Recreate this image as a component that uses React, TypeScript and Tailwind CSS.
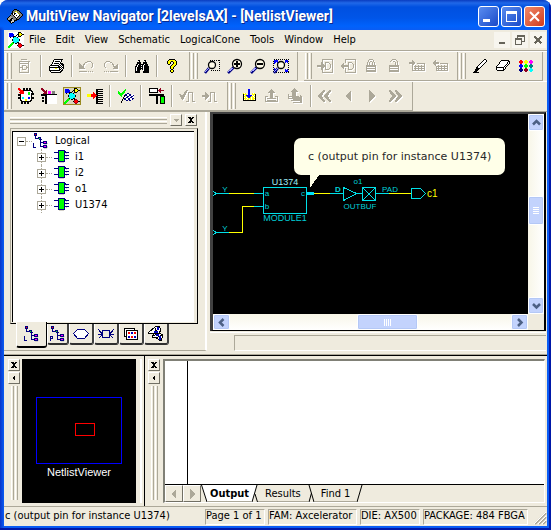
import type { ReactNode } from "react";

const palette: Record<string, string> = {
  k: "#000000", w: "#ffffff", g: "#aca899", s: "#d4d0c8", p: "#808080",
  y: "#ffff00", o: "#a0a000", b: "#0000ff", n: "#000080", r: "#ff0000",
  d: "#900020", G: "#00ff00", c: "#00ffff", m: "#ff00ff", t: "#008080",
};

function Pixels({ rows, size = 16 }: { rows: string[]; size?: number }) {
  return (
    <svg width={size} height={size} viewBox={`0 0 ${size} ${size}`} shapeRendering="crispEdges" aria-hidden="true">
      {rows.flatMap((row, y) =>
        [...row].map((ch, x) => (palette[ch] ? <rect key={`${x}-${y}`} x={x} y={y} width="1" height="1" fill={palette[ch]} /> : null)),
      )}
    </svg>
  );
}

function Icon({ children, size = 16 }: { children: ReactNode; size?: number }) {
  return (
    <svg width={size} height={size} viewBox={`0 0 ${size} ${size}`} fill="none" shapeRendering="crispEdges" aria-hidden="true">
      {children}
    </svg>
  );
}

/* Greyed-out icon: a white relief one pixel down and right of the grey shape. */
function Etched({ line, fill }: { line?: string; fill?: string }) {
  return (
    <Icon size={17}>
      {["#ffffff", "#aca899"].map((c, i) => (
        <g key={c} transform={i === 0 ? "translate(1 1)" : undefined}>
          {line && <path d={line} stroke={c} />}
          {fill && <path d={fill} fill={c} />}
        </g>
      ))}
    </Icon>
  );
}

const printer = [
  "................",
  ".....kkkkkkkkk..",
  "....kwwwwwwwk...",
  "....kwkkkkkwk...",
  "...kwwwwwwwk....",
  "...kwkkkkkwkkk..",
  "..kwwwwwwwkwkkk.",
  ".kkkkkkkkkwkwkk.",
  "kwwwwwwwwkkwkwk.",
  "kkkkkkkkkkkkwkk.",
  "kwwwwwyywwkwkwk.",
  "kwwwwwwwwwkkwk..",
  "kkkkkkkkkkkwkk..",
  ".kwwwwwwwwwkk...",
  "..kkkkkkkkkk....",
];
const binoculars = [
  "................",
  "................",
  "....kk....kk....",
  "....wk....wk....",
  "...kkkk..kkkk...",
  "...kkkk..kkkk...",
  "..kkwkkkkkwkkk..",
  "..kwkkkwkwkkkk..",
  ".kkwkkkkkwkkkkk.",
  ".kwkkkkwkwkkkkk.",
  ".kwkkkkkkwkkkkk.",
  ".kwkkkk.kwkkkkk.",
  ".kwkkk...wkkkkk.",
  ".kkkkk...kkkkkk.",
  ".kkkkk...kkkkkk.",
];
const question = [
  "................",
  "....kkkkkk......",
  "...kyyyyyyk.....",
  "..kyyykkyyyk....",
  "..kyyk..kyyk....",
  "..kyyk..kyyk....",
  "...kk..kyyyk....",
  "......kyyyk.....",
  ".....kyyyk......",
  ".....kyyk.......",
  ".....kyyk.......",
  "......kk........",
  ".....kyyk.......",
  ".....kyyk.......",
  "......kk........",
];
const pencil = [
  "................",
  "............kk..",
  "...........kwwk.",
  "..........kwwwk.",
  ".........kwwwk..",
  "........kwwwk...",
  ".......kwwwk....",
  "......kwwwk.....",
  ".....kwwwk......",
  "....kkwwk.......",
  "....kkkk........",
  "...kkkk.........",
  "...kkk..........",
  "..kkk...........",
  ".kkkkkk.........",
];
const eraser = [
  "................",
  "................",
  "......kkkkkkkk..",
  ".....kwwwwwwwkk.",
  "....kwwwwwwwkwk.",
  "....kwwwwwwwkwk.",
  "...kwwwwwwwkwk..",
  "..kwwwwwwwkwk...",
  ".kwwwwwwwkwk....",
  ".kkkkkkkkwk.....",
  ".kwwwwwwkwk.....",
  ".kwwwwwwkk......",
  "..kkkkkkk.......",
];
const swatches = [
  "................",
  "................",
  "..rr...yy...mm..",
  ".rrrr.yyyy.mmmm.",
  ".rrrr.yyyy.mmmm.",
  "..rr...yy...mm..",
  "..bb...GG...tt..",
  ".bbbb.GGGG.tttt.",
  ".bbbb.GGGG.tttt.",
  "..bb...GG...tt..",
  "..nn...dd...cc..",
  ".nnnn.dddd.cccc.",
  ".nnnn.dddd.cccc.",
  "..nn...dd...cc..",
];
const netlist = [
  "..........kkk...",
  ".bbbb.....kyyk..",
  ".bbbbb...kkyyykk",
  ".bbbbb..k.kyyk..",
  ".bbbbkkk..kkk...",
  "..k..kccck......",
  ".....cccccc.....",
  "....kcccccck....",
  "....kcccccck....",
  ".....cccccc.....",
  "....Gkccckk.....",
  "...GGG.kk.kdd...",
  "..GGG.....drrd..",
  ".GGG.....krrrrkk",
  "GGG.......drrd..",
  "GG.........dd...",
];
const drc = [
  "rr...kk.kk.kk...",
  "rrr..kk.kk.kk...",
  ".rrrrkkkkkkkkk..",
  "..rrrrwwwwwwwkk.",
  ".rrrrrwwwwGGwwk.",
  "..rrrrwwwwGGwkkk",
  "kkkwwwwwwwGGwkkk",
  "kkkwwwwwwwwwwk..",
  "..kwwwwwwwwwwk..",
  "kkkwccwwwwbbwkkk",
  "kkkwccwwwwbbwkkk",
  "..kwwwwyywwwwk..",
  "..kkwwwyywwwkk..",
  "...kkkkkkkkkk...",
  "...kk.kk.kk.....",
  "...kk.kk.kk.....",
];
const corner = [
  "dd..............",
  "ddd.............",
  ".ddd.d..........",
  "..dddd.mmm.ppp..",
  "...ddd.mmm.ppp..",
  "..dddd.mmm.ppp..",
  "kkkkkkkkkkkkkkkk",
  "kkkkkkwwwwwwwwww",
  "....kkwwwwwwwwww",
  ".kk.kkwwwwwwwwww",
  ".kk.kkwwwwwwwwww",
  "....kkwwwwwwwwww",
  ".kk.kkwwwwwwwwww",
  ".kk.kkwwwwwwwwww",
  "....kkwwwwwwwwww",
  "....kkwwwwwwwwww",
];
const ladder = [
  "................",
  ".........kkkkkkk",
  ".........kk.....",
  ".........kkkkkkk",
  "......r..kk.....",
  "......rr.kkkkkkk",
  "yyyyrrrrrkk.....",
  "yyyyrrrrrrkkkkkk",
  "yyyyrrrrrkk.....",
  "......rr.kkkkkkk",
  "......r..kk.....",
  ".........kkkkkkk",
  ".........kk.....",
  ".........kkkkkkk",
  ".........kk.....",
  ".........kkkkkkk",
];
const flag = [
  "................",
  ".......G........",
  "......GG........",
  "G....GG.........",
  "GG..GGG.........",
  "GGGGGG...nn.....",
  ".GGGG..nnwwnn.ww",
  "..GG..knnwwnnwwn",
  "...G..kwwnnwwnnw",
  ".....kwwnnwwnnww",
  ".....knnwwnnwwnn",
  "....k.nnwwnnwwn.",
  "....k...nn.nn...",
  "...k............",
  "...k............",
];
const blocks = [
  "kkkkkkkkk..d....",
  "kwwwwwwwk.dd....",
  "kwwwwwwwkdddddd.",
  "kwwwwwwwk.dd....",
  "kkkkkkkkk..d....",
  "................",
  "kkkkkkkkkkkkkkk.",
  "kkkkkkkkkkkkkkk.",
  ".......kk..kkkkk",
  ".......kk..kGGGk",
  ".......kk..kGGGk",
  ".......kk..kGGGk",
  ".......kk..kGGGk",
  ".......kk..kGGGk",
  ".......kk..kGGGk",
  ".......kk..kkkkk",
];
const download = [
  "................",
  ".....bb.........",
  ".....bb.........",
  ".....bb.........",
  ".....bb.........",
  "ywy..bb..ywy....",
  "kyyy.bb..yyyk...",
  "kwybbbbbbwywk...",
  "kyyybbbbyywyk...",
  "kwywybbywyywk...",
  "kyyywyyywyyyk...",
  "kwywyywywyywk...",
  "kkkkkkkkkkkkk...",
].map((r) => "." + r.slice(0, 15));
const chip = [
  "................",
  "....nnnnnnn.....",
  "....nGGGGGnn....",
  "nnnnnGGGGGnnnnn.",
  "....nGGGGGn.s...",
  "....nGGGGGn.....",
  "....nGGGGGnnnnn.",
  "....nGGGGGn.s...",
  "....nGGGGGn.....",
  "nnnnnGGGGGnnnnn.",
  "....nGGGGGn.s...",
  "....nGGGGGn.....",
  "....nnnnnnn.....",
  ".....sssss......",
];
const appIcon = [
  "................",
  ".......kkk......",
  "......kpppkk....",
  ".....kppoyppk...",
  ".....kpowwoppk..",
  "....kkwkkwwoppk.",
  "....pkwkwwwwoppk",
  "...kppkwwkwwkppk",
  "..kgpppkwwwkppk.",
  ".kgggpppkwkppk..",
  "kgggkkpppkppk...",
  "kggkkspppkkk....",
  ".kkkksskkk......",
  "..kksssk........",
  "...kskk.........",
  "....k...........",
];

function hierarchy(letter: "L" | "P") {
  const mark = letter === "L"
    ? ["n....", "n....", "n....", "n....", "nnn.."]
    : ["nnn..", "n.n..", "nnn..", "n....", "n...."];
  return [
    ".nnn............",
    ".nrn............",
    ".nnn............",
    "..n.............",
    "..n..nnn........",
    "..nnnnGn........",
    "......nnn.......",
    ".......n........",
    ".......n..nnnn..",
    ".......nnnnmmn..",
    mark[0] + "..n..nnnns.",
    mark[1] + "..n...sss..",
    mark[2] + "..n..nnnn..",
    mark[3] + "..nnnnmmns.",
    mark[4] + ".....nnnns.",
    "...........sss..",
  ];
}

function Magnifier({ kind }: { kind: "area" | "in" | "out" | "fit" }) {
  const small = kind === "area" || kind === "fit";
  const cx = small ? 8 : 10;
  const cy = small ? 7 : 6;
  return (
    <Icon>
      {kind === "area" && <path d="M6 2.500H15M15.500 2V13M7 12.500H15" stroke="#000" strokeDasharray="1 1" />}
      {kind === "fit" && (
        <>
          <rect x="0.500" y="1.500" width="15" height="13" stroke="#000" strokeDasharray="1 1" />
          <path d="M1 2h4l-1 1l1 1l-1 1l-1 -1l-2 2zM15 2h-4l1 1l-1 1l1 1l1 -1l2 2zM1 14h3l-1 -1v-1l-2 -2zM15 14h-4l1 -1l-1 -1l1 -1l1 1l2 -2z" fill="#0000ff" />
        </>
      )}
      <path d={`M${cx - 3} ${cy + 3}L1 15`} stroke="#000080" strokeWidth="2.500" shapeRendering="auto" />
      <path d={`M${cx - 3} ${cy + 3}L1 14`} stroke="#a0a0ff" strokeWidth="1" />
      <circle cx={cx} cy={cy} r={small ? 3.5 : 4.5} fill="#fffbe8" stroke="#000" strokeWidth="1.300" shapeRendering="auto" />
      {kind === "in" && <path d="M7 6H13M10 3V9" stroke="#000" strokeWidth="2" />}
      {kind === "out" && <path d="M7 6H13" stroke="#000" strokeWidth="2" />}
    </Icon>
  );
}

function Tool({ label, children }: { label: string; children: ReactNode }) {
  return (
    <button type="button" aria-label={label} className="flex h-[22px] w-[23px] items-center justify-center">
      {children}
    </button>
  );
}

function Sep() {
  return <span className="mx-[3px] h-[22px] w-[2px] border-l border-l-[#aca899] border-r border-r-white" />;
}

function Grips() {
  return (
    <span className="flex w-[10px] shrink-0 gap-px self-stretch py-px pl-px">
      <span className="w-[3px] border-l border-r border-l-white border-r-[#aca899]" />
      <span className="w-[3px] border-l border-r border-l-white border-r-[#aca899]" />
    </span>
  );
}

function Band({ children }: { children: ReactNode }) {
  return (
    <div role="toolbar" className="flex h-[29px] shrink-0 items-center border-r border-b border-r-[#aca899] border-b-[#aca899] pr-[5px]">
      <Grips />
      {children}
    </div>
  );
}

function Toolbars() {
  return (
    <div className="shrink-0 overflow-hidden border-b border-b-[#aca899]">
      <div className="flex h-[30px] border-t border-t-white">
        <Band>
          <Tool label="Database"><Etched line="M1.500 3.500H12.500M2.500 4V14.500H11.500V4M4 1.500H10M5.500 7.500H8.500L9.500 8.500V10.500L8.500 11.500H5.500zM2 5.500H12M2 9.500H5M10 9.500H12" /></Tool>
          <Sep />
          <Tool label="Print"><Pixels rows={printer} /></Tool>
          <Sep />
          <Tool label="Undo"><Etched line="M3.500 9.500L5.500 5.500L8.500 3.500H11.500L13.500 5.500V8.500L11.500 10.500" fill="M0 5v6h6zM0 13h8v1h-8zM9 13h1v1h-1zM11 13h1v1h-1zM13 13h1v1h-1z" /></Tool>
          <Tool label="Redo"><Etched line="M12.500 9.500L10.500 5.500L7.500 3.500H4.500L2.500 5.500V8.500L4.500 10.500" fill="M16 5v6h-6zM8 13h8v1h-8zM6 13h1v1h-1zM4 13h1v1h-1zM2 13h1v1h-1z" /></Tool>
          <Sep />
          <Tool label="Find"><Pixels rows={binoculars} /></Tool>
          <Sep />
          <Tool label="Help"><Pixels rows={question} /></Tool>
        </Band>
        <Band>
          <Tool label="Zoom area"><Magnifier kind="area" /></Tool>
          <Tool label="Zoom in"><Magnifier kind="in" /></Tool>
          <Tool label="Zoom out"><Magnifier kind="out" /></Tool>
          <Tool label="Zoom to fit"><Magnifier kind="fit" /></Tool>
        </Band>
        <div className="w-[6px] shrink-0" />
        <Band>
          <Tool label="Assign input"><Etched line="M5.500 5V1.500H15.500V14.500H5.500V10M8.500 4.500H11.500L13.500 6.500V9.500L11.500 11.500H8.500z" fill="M0 7h4v-3l4 4l-4 4v-3h-4z" /></Tool>
          <Tool label="Assign output"><Etched line="M5.500 5V1.500H15.500V14.500H5.500V10M8.500 4.500H11.500L13.500 6.500V9.500L11.500 11.500H8.500z" fill="M8 7h-4v-3l-4 4l4 4v-3h4z" /></Tool>
          <Tool label="Lock"><Etched line="M4.500 7V4.500L6.500 1.500H9.500L11.500 4.500V7M6.500 7V4.500L7.500 3.500H8.500L9.500 4.500V7" fill="M3 7h10v2h-10zM3 10h10v1h-10zM3 12h10v2h-10zM3 7h1v7h-1zM12 7h1v7h-1z" /></Tool>
          <Tool label="Unlock"><Etched line="M4.500 4V3.500L6.500 1.500H9.500L11.500 3.500V7M6.500 4.500L7.500 3.500H8.500L9.500 4.500V7" fill="M3 7h10v2h-10zM3 10h10v1h-10zM3 12h10v2h-10zM3 7h1v7h-1zM12 7h1v7h-1z" /></Tool>
          <Tool label="Add to region"><Etched line="M8 5.500H15.500V12.500H3.500V8M5 8.500H15M5 10.500H15M6.500 7V12M9.500 7V12M12.500 7V12" fill="M0 4h3v-2l4 3l-4 3v-2h-3z" /></Tool>
          <Tool label="Remove from region"><Etched line="M8 5.500H15.500V12.500H4.500V8M5 8.500H15M5 10.500H15M6.500 7V12M9.500 7V12M12.500 7V12" fill="M7 4h-3v-2l-4 3l4 3v-2h3z" /></Tool>
        </Band>
        <Band>
          <Tool label="Highlight"><Pixels rows={pencil} /></Tool>
          <Tool label="Erase highlight"><Pixels rows={eraser} /></Tool>
          <Tool label="Colors"><Pixels rows={swatches} /></Tool>
        </Band>
      </div>
      <div className="flex h-[30px] border-t border-t-white">
        <Band>
          <Tool label="ChipPlanner"><Pixels rows={drc} /></Tool>
          <Tool label="PinEditor"><Pixels rows={corner} /></Tool>
          <Tool label="NetlistViewer">
            <span className="bg-[#d8d4bc] outline outline-[#9a8a20]"><Pixels rows={netlist} /></span>
          </Tool>
          <Tool label="I/O Attribute Editor"><Pixels rows={ladder} /></Tool>
          <Sep />
          <Tool label="Commit and check"><Pixels rows={flag} /></Tool>
          <Sep />
          <Tool label="Place"><Pixels rows={blocks} /></Tool>
          <Sep />
          <Tool label="Check timing"><Etched line="M7 13.500H9.500V4.500H13.500V13.500H16" fill="M0 6h2l1 2l4 -6h2l-5 10h-1z" /></Tool>
          <Tool label="Run timing"><Etched line="M6 13.500H8.500V4.500H12.500V13.500H15" fill="M0 7h3v-3l4 4l-4 4v-3h-3z" /></Tool>
        </Band>
        <Band>
          <Tool label="Push down"><Pixels rows={download} /></Tool>
          <Tool label="Pop up"><Etched line="M4 8.500H1.500V13.500H13.500V8.500H11M3 10.500H12M3 12.500H12" fill="M7 1l4 4h-2v5h-3v-5h-2z" /></Tool>
          <Tool label="Go to top"><Etched line="M1.500 6V10.500H9M3.500 12.500H11M5.500 14.500H14.500V8M2 8.500H12M4 10.500H14M13.500 7V14" fill="M7 0l4 4h-2v5h-4v-5h-2zM5 9h8v4h-6z" /></Tool>
          <Sep />
          <Tool label="First page"><Etched fill="M5 2h2v1l-3 5l3 5v1h-2l-5 -6zM11 2h2v1l-3 5l3 5v1h-2l-5 -6z" /></Tool>
          <Tool label="Previous page"><Etched fill="M10 2v12l-6 -6z" /></Tool>
          <Tool label="Next page"><Etched fill="M5 2v12l6 -6z" /></Tool>
          <Tool label="Last page"><Etched fill="M4 2h-2v1l3 5l-3 5v1h2l5 -6zM10 2h-2v1l3 5l-3 5v1h2l5 -6z" /></Tool>
        </Band>
      </div>
    </div>
  );
}

function TitleBar() {
  const base = "flex h-[21px] w-[21px] items-center justify-center rounded-[3px] border border-white";
  return (
    <header className="flex h-[30px] shrink-0 items-center pt-[2px] pr-[2px] pl-[3px]">
      <Pixels rows={appIcon} />
      <h1 className="ml-[3px] flex-1 truncate font-['Roboto',sans-serif] text-[14px] leading-[18px] font-bold text-white [text-shadow:1px_1px_0_#0a2a90]">
        MultiView Navigator [2levelsAX] - [NetlistViewer]
      </h1>
      <div className="flex gap-[2px]">
        <button type="button" aria-label="Minimize" className={`${base} bg-linear-to-br from-[#5a8cf0] to-[#1a48c8]`}>
          <Icon size={19}><path d="M4 12h7v3h-7z" fill="#fff" /></Icon>
        </button>
        <button type="button" aria-label="Maximize" className={`${base} bg-linear-to-br from-[#5a8cf0] to-[#1a48c8]`}>
          <Icon size={19}><path d="M4 4h11v11h-11zM5 7v7h9v-7z" fill="#fff" fillRule="evenodd" /></Icon>
        </button>
        <button type="button" aria-label="Close" className={`${base} bg-linear-to-br from-[#f08868] to-[#d03818]`}>
          <Icon size={19}><path d="M5 5L14 14M14 5L5 14" stroke="#fff" strokeWidth="2" shapeRendering="auto" /></Icon>
        </button>
      </div>
    </header>
  );
}

const menus = ["File", "Edit", "View", "Schematic", "LogicalCone", "Tools", "Window", "Help"];

function MenuBar() {
  const box = "flex h-[16px] w-[16px] items-center justify-center bg-[#f7f5ee]";
  return (
    <nav className="flex h-[21px] shrink-0 items-center border-b border-b-[#aca899] pl-[4px]">
      <span className="bg-white"><Pixels rows={netlist} /></span>
      {menus.map((m) => (
        <button key={m} type="button" className="px-[5px] leading-[16px]">{m}</button>
      ))}
      <div className="ml-auto flex gap-[2px] pr-px">
        <button type="button" aria-label="Minimize document" className={box}><Icon><path d="M5 10h6v2h-6z" fill="#66645a" /></Icon></button>
        <button type="button" aria-label="Restore document" className={box}><Icon><path d="M5.500 6V4.500H12.500V9.500H10M3.500 7.500H9.500V12.500H3.500zM5 3.500H13M3 6.500H10" stroke="#66645a" /></Icon></button>
        <button type="button" aria-label="Close document" className={box}><Icon><path d="M4.500 4.500L11.500 11.500M11.500 4.500L4.500 11.500" stroke="#66645a" strokeWidth="2" /></Icon></button>
      </div>
    </nav>
  );
}

function Expander({ open }: { open?: boolean }) {
  return (
    <button type="button" aria-label={open ? "Collapse" : "Expand"} className="h-[9px] w-[9px] shrink-0 border border-[#aca899] bg-white">
      <svg width="7" height="7" viewBox="0 0 7 7" shapeRendering="crispEdges">
        <path d={open ? "M1 3h5v1h-5z" : "M1 3h5v1h-5zM3 1h1v5h-1z"} fill="#000" />
      </svg>
    </button>
  );
}

const Dots = () => <span className="w-[6px] border-t border-dotted border-t-[#aca899]" />;

function TreeView() {
  return (
    <ul className="flex-1 overflow-hidden border-t border-l border-black bg-white pt-px pl-[4px]">
      <li>
        <div className="flex h-[16px] items-center">
          <Expander open />
          <Dots />
          <span className="ml-px flex w-[22px]"><Pixels rows={hierarchy("L")} /></span>
          Logical
        </div>
        <ul>
          {["i1", "i2", "o1", "U1374"].map((n) => (
            <li key={n} className="flex h-[16px] items-center pl-[20px]">
              <span className="flex flex-col items-center">
                <span className="h-[4px] border-l border-dotted border-l-[#aca899]" />
                <Expander />
                <span className="h-[3px] border-l border-dotted border-l-[#aca899]" />
              </span>
              <Dots />
              <span className="flex w-[23px] pl-[2px]"><Pixels rows={chip} /></span>
              {n}
            </li>
          ))}
        </ul>
      </li>
    </ul>
  );
}

function DockTabs() {
  const tab = "flex h-[21px] items-center justify-center rounded-b-[3px] border-r-2 border-b-2 border-l border-r-[#404040] border-b-[#303030] border-l-white";
  return (
    <div role="tablist" className="flex h-[26px] items-start pl-[6px]">
      <button type="button" role="tab" aria-selected="true" aria-label="Logical" className="-mt-[2px] flex h-[26px] w-[31px] items-center justify-center rounded-b-[3px] border-r border-b-2 border-l border-r-black border-b-black border-l-white bg-[#efebde]">
        <Pixels rows={hierarchy("L")} />
      </button>
      <button type="button" role="tab" aria-label="Physical" className={`${tab} w-[22px]`}><Pixels rows={hierarchy("P")} /></button>
      <button type="button" role="tab" aria-label="Ports" className={`${tab} w-[25px]`}>
        <Icon><path d="M4.500 3.500H11.500L15.500 7.500L11.500 12.500H4.500L0.500 7.500z" fill="#fff" stroke="#000080" /></Icon>
      </button>
      <button type="button" role="tab" aria-label="Nets" className={`${tab} w-[25px]`}>
        <Icon><path d="M4.500 4.500H11.500V11.500H4.500zM0 8.500H4M12 8.500H16M0.500 3.500L4.500 8.500L0.500 12.500M15.500 3.500L11.500 8.500L15.500 12.500" stroke="#000080" /></Icon>
      </button>
      <button type="button" role="tab" aria-label="Regions" className={`${tab} w-[25px]`}>
        <Icon><path d="M1.500 2.500H11.500V10.500H1.500z" fill="#fff" stroke="#000" /><path d="M3.500 4.500H14.500V13.500H3.500z" fill="#fff" stroke="#000" /><path d="M5 6h2v2h-2zM11 6h2v2h-2zM8 10h2v2h-2z" fill="#ff0000" /><path d="M8 6h2v2h-2zM5 10h2v2h-2zM11 10h2v2h-2z" fill="#0000c0" /></Icon>
      </button>
      <button type="button" role="tab" aria-label="Cones" className={`${tab} w-[25px]`}>
        <Icon><path d="M0 7L7 1L11 0L13 4L11 7L15 9L13 15L8 12L4 11L6 8z" fill="#fff" stroke="#000" /><path d="M1 7H10M5 10L11 7M8 12L14 9M7 2L9 7" stroke="#000" /><path d="M9 1h2v3h-2zM6 5h4v2h-4zM11 10h2v4h-2zM8 8h3v2h-3z" fill="#0000c0" /></Icon>
      </button>
    </div>
  );
}

function SmallButton({ label, children }: { label: string; children: ReactNode }) {
  return (
    <button type="button" aria-label={label} className="flex h-[12px] w-[12px] shrink-0 items-center justify-center border-t border-r border-b border-l border-t-white border-r-[#716f64] border-b-[#716f64] border-l-white">
      {children}
    </button>
  );
}

const Cross = () => <Icon size={8}><path d="M1 1h2l1 1l1 -1h2l-2 3l2 3h-2l-1 -1l-1 1h-2l2 -3z" fill="#000" /></Icon>;

function LeftDock() {
  return (
    <aside className="mb-[4px] flex w-[203px] shrink-0 flex-col border-r-2 border-b border-r-white border-b-[#aca899] pr-[7px] pl-[6px]">
      <div className="flex h-[16px] shrink-0 items-center gap-[3px] pr-px">
        <span className="flex flex-1 flex-col gap-px">
          <span className="h-[3px] border-t border-b border-t-white border-b-[#aca899]" />
          <span className="h-[3px] border-t border-b border-t-white border-b-[#aca899]" />
        </span>
        <SmallButton label="Dock menu"><Icon size={8}><path d="M1 3h6l-3 3z" fill="#aca899" /></Icon></SmallButton>
        <SmallButton label="Close dock"><Cross /></SmallButton>
      </div>
      <div className="flex flex-1 flex-col border-t border-r border-b border-l border-t-[#aca899] border-r-black border-b-black border-l-[#aca899] pt-[2px] pr-[3px] pb-px pl-px">
        <TreeView />
      </div>
      <DockTabs />
    </aside>
  );
}

function Chevron({ d }: { d: string }) {
  return <svg width="9" height="9" viewBox="0 0 9 9" fill="none"><path d={d} stroke="#4d6185" strokeWidth="2.500" /></svg>;
}

const scrollPart = "flex shrink-0 items-center justify-center rounded-[2px] border border-white bg-[#c3d3fd] shadow-[inset_0_0_0_1px_#b4c8f6]";

function ScrollBars({ vertical }: { vertical?: boolean }) {
  return vertical ? (
    <div className="flex flex-col items-center bg-linear-to-r from-[#f8f6e8] to-white">
      <button type="button" aria-label="Scroll up" className={`${scrollPart} h-[17px] w-[16px]`}><Chevron d="M1 6.500L4.500 3L8 6.500" /></button>
      <span className="flex-[65]" />
      <span className={`${scrollPart} h-[29px] w-[16px] flex-col gap-px`}>
        {[0, 1, 2, 3].map((i) => <span key={i} className="h-px w-[6px] bg-white" />)}
      </span>
      <span className="flex-[71]" />
      <button type="button" aria-label="Scroll down" className={`${scrollPart} h-[17px] w-[16px]`}><Chevron d="M1 3L4.500 6.500L8 3" /></button>
    </div>
  ) : (
    <div className="flex items-center bg-linear-to-b from-[#f8f6e8] to-white">
      <button type="button" aria-label="Scroll left" className={`${scrollPart} h-[16px] w-[17px]`}><Chevron d="M6.500 1L3 4.500L6.500 8" /></button>
      <span className="flex-[127]" />
      <span className={`${scrollPart} h-[16px] w-[61px] gap-px`}>
        {[0, 1, 2, 3].map((i) => <span key={i} className="h-[7px] w-px bg-white" />)}
      </span>
      <span className="flex-[93]" />
      <button type="button" aria-label="Scroll right" className={`${scrollPart} h-[16px] w-[17px]`}><Chevron d="M3 1L6.500 4.500L3 8" /></button>
    </div>
  );
}

function Schematic() {
  return (
    <div className="relative min-h-0 overflow-hidden bg-black">
      <svg className="absolute inset-0 h-full w-full font-['Liberation_Sans',sans-serif]" fill="none" shapeRendering="crispEdges">
        <path d="M16 79.500H41M101 79.500H117M176 79.500H198M41 92.500H29.500V118.500H16" stroke="#ffff00" />
        <g stroke="#00e0e8">
          <path d="M0 77L3 79.500L0 82M3 79.500H16M41 79.500H50M0 116L3 118.500L0 121M3 118.500H16M41 92.500H50" />
          <rect x="50.500" y="73.500" width="43" height="26" />
          <path d="M117 79.500H130M130.500 73.500V86.500L143.500 79.500zM143 79.500H149" />
          <path d="M149.500 73.500H162.500V86.500H149.500zL162.500 86.500M162.500 73.500L149.500 86.500M163 79.500H176" />
          <path d="M198.500 74.500H207.500L212.500 79.500L207.500 84.500H198.500z" />
        </g>
        <path d="M94 78h7v3h-7z" fill="#00e0f8" />
        <g fill="#00d0d8" fontSize="8" textAnchor="middle">
          <text x="12" y="78">Y</text>
          <text x="12" y="117">Y</text>
          <text x="54" y="82">a</text>
          <text x="54" y="95">b</text>
          <text x="90" y="82">c</text>
          <text x="125" y="78" fontWeight="bold">D</text>
          <text x="145" y="70">o1</text>
          <text x="147" y="95">OUTBUF</text>
          <text x="177" y="78">PAD</text>
          <text x="72" y="71" fontSize="9" fill="#a0f0f8">U1374</text>
          <text x="72" y="107" fontSize="9">MODULE1</text>
        </g>
        <text x="214" y="83" fontSize="10" fill="#ffff00">c1</text>
        <path d="M97 58H108L97 74z" fill="#ffffe8" />
      </svg>
      <div role="tooltip" className="absolute top-[24px] left-[81px] rounded-[7px] bg-[#ffffe8] px-[14px] py-[10px] font-['DejaVu_Sans',sans-serif] text-[11px] leading-[17px] whitespace-nowrap text-[#282828]">
        c (output pin for instance U1374)
      </div>
    </div>
  );
}

function Viewer() {
  return (
    <main className="flex min-w-0 flex-1 flex-col pr-px pl-[3px]">
      <div className="grid min-h-0 flex-1 grid-cols-[1fr_16px] grid-rows-[1fr_16px] border-t-2 border-r-2 border-b border-l-[3px] border-t-[#404040] border-r-black border-b-black border-l-[#404040] bg-[#efebde]">
        <Schematic />
        <ScrollBars vertical />
        <ScrollBars />
      </div>
      <div className="mt-px mb-[4px] h-[19px] shrink-0 border-t border-t-white pt-[2px] pl-[24px]">
        <div className="h-[16px] border-t border-b border-l border-t-[#aca899] border-b-white border-l-[#aca899]" />
      </div>
    </main>
  );
}

function DockRail({ label }: { label: string }) {
  return (
    <div className="flex w-[12px] shrink-0 flex-col items-center gap-px">
      <SmallButton label={`Close ${label}`}><Cross /></SmallButton>
      <SmallButton label={`Collapse ${label}`}><Icon size={8}><path d="M5 1v6l-3 -3z" fill="#000" /></Icon></SmallButton>
      <span className="flex flex-1 gap-px pt-px pb-[3px]">
        <span className="w-[3px] border-l border-r border-l-white border-r-[#aca899]" />
        <span className="w-[3px] border-l border-r border-l-white border-r-[#aca899]" />
      </span>
    </div>
  );
}

function Slant({ kind }: { kind: "first" | "active" | "plain" | "last" }) {
  return (
    <svg width="7" height="17" viewBox="0 0 7 17" className="shrink-0" fill="none" aria-hidden="true">
      {kind === "first" && <><path d="M0 0H7V17H6z" fill="#fff" /><path d="M0.500 0L6 17" stroke="#000" /></>}
      {kind === "active" && <><path d="M0 0H6L1 17H0z" fill="#fff" /><path d="M6 0L1 17M4 9L6.500 17" stroke="#000" /></>}
      {kind === "plain" && <path d="M1 0L6 17M3.500 8L1 17" stroke="#000" />}
      {kind === "last" && <path d="M6 0L1 17" stroke="#000" />}
    </svg>
  );
}

function OutputPane() {
  const arrow = "flex h-[17px] w-[18px] shrink-0 items-center justify-center border border-t-white border-r-[#716f64] border-b-[#716f64] border-l-white";
  const tab = "h-[17px] border-b border-b-[#aca899] leading-[17px]";
  return (
    <section className="flex min-w-0 flex-1 flex-col border-t-2 border-r border-b border-l-2 border-t-[#808076] border-r-white border-b-white border-l-[#808076]">
      <div className="flex flex-1 border-b border-b-black bg-white pl-[22px]">
        <div role="log" className="flex-1 border-l border-l-black" />
      </div>
      <div role="tablist" className="flex h-[17px] shrink-0">
        <button type="button" aria-label="Previous tab" className={arrow}><Icon size={10}><path d="M7 0v10l-5 -5z" fill="#aca899" /></Icon></button>
        <button type="button" aria-label="Next tab" className={arrow}><Icon size={10}><path d="M3 0v10l5 -5z" fill="#aca899" /></Icon></button>
        <Slant kind="first" />
        <button type="button" role="tab" aria-selected="true" className={`${tab} bg-white px-[2px] font-bold`}>Output</button>
        <Slant kind="active" />
        <button type="button" role="tab" className={`${tab} px-[7px]`}>Results</button>
        <Slant kind="plain" />
        <button type="button" role="tab" className={`${tab} px-[6px]`}>Find 1</button>
        <Slant kind="last" />
      </div>
    </section>
  );
}

function LowerPanes() {
  return (
    <div className="flex h-[150px] shrink-0">
      <section className="flex w-[141px] shrink-0 border-r border-r-black pt-[3px] pb-[3px] pl-[4px]">
        <DockRail label="overview" />
        <div className="ml-[2px] flex flex-1 flex-col items-center bg-black pt-[38px] text-white">
          <div className="flex h-[67px] w-[86px] justify-center border border-[#0000ff] pt-[25px] pl-[11px]">
            <div className="h-[13px] w-[20px] border border-[#ff0000]" />
          </div>
          <p className="pt-px font-['Liberation_Sans',sans-serif] leading-[15px]">NetlistViewer</p>
        </div>
        <span className="mr-[2px] ml-[4px] w-[2px] bg-white" />
      </section>
      <section className="flex min-w-0 flex-1 py-[3px] pr-[2px] pl-[3px]">
        <DockRail label="output" />
        <div className="ml-[3px] flex min-w-0 flex-1"><OutputPane /></div>
      </section>
    </div>
  );
}

function StatusBar() {
  const cell = "flex h-[16px] shrink-0 items-center overflow-hidden border border-t-[#aca899] border-r-white border-b-white border-l-[#aca899] whitespace-nowrap";
  return (
    <footer className="flex h-[20px] shrink-0 items-center gap-[3px] border-t border-t-[#aca899] pl-px">
      <span className="flex-1 truncate">c (output pin for instance U1374)</span>
      <span className={`${cell} w-[60px]`}>Page 1 of 1</span>
      <span className={`${cell} w-[89px]`}>FAM: Axcelerator</span>
      <span className={`${cell} w-[60px]`}>DIE: AX500</span>
      <span className={`${cell} w-[105px]`}>PACKAGE: 484 FBGA</span>
      <svg width="16" height="17" viewBox="0 0 16 17" className="shrink-0" fill="none" aria-hidden="true">
        <path d="M4 16L15 5M8 16L15 9M12 16L15 13" stroke="#aca899" strokeWidth="2" />
        <path d="M3 16L15 4M7 16L15 8M11 16L15 12" stroke="#fff" />
      </svg>
    </footer>
  );
}

export default function App() {
  return (
    <div className="h-screen bg-white">
      <div className="flex h-full flex-col overflow-hidden rounded-t-[8px] bg-linear-to-r from-[#0a34c8] via-[#0a5cf4] via-[4px] to-[#0a5cf4] font-['DejaVu_Sans_Condensed','DejaVu_Sans',sans-serif] text-[11px] text-black">
        <div className="flex min-h-0 flex-1 flex-col border-r-2 border-b-2 border-r-[#0018a8] border-b-[#0018a8] bg-[linear-gradient(to_bottom,#0a3cc0_0px,#2068e8_3px,#0050e0_7px,#0055e8_18px,#0062fc_26px,transparent_30px)] pr-[2px] pb-[2px] pl-[4px]">
          <TitleBar />
          <div className="flex min-h-0 flex-1 flex-col bg-[#efebde]">
            <MenuBar />
            <Toolbars />
            <div className="flex min-h-0 flex-1 border-b border-b-black shadow-[inset_0_-1px_0_#aca899]">
              <LeftDock />
              <Viewer />
            </div>
            <LowerPanes />
            <StatusBar />
          </div>
        </div>
      </div>
    </div>
  );
}
